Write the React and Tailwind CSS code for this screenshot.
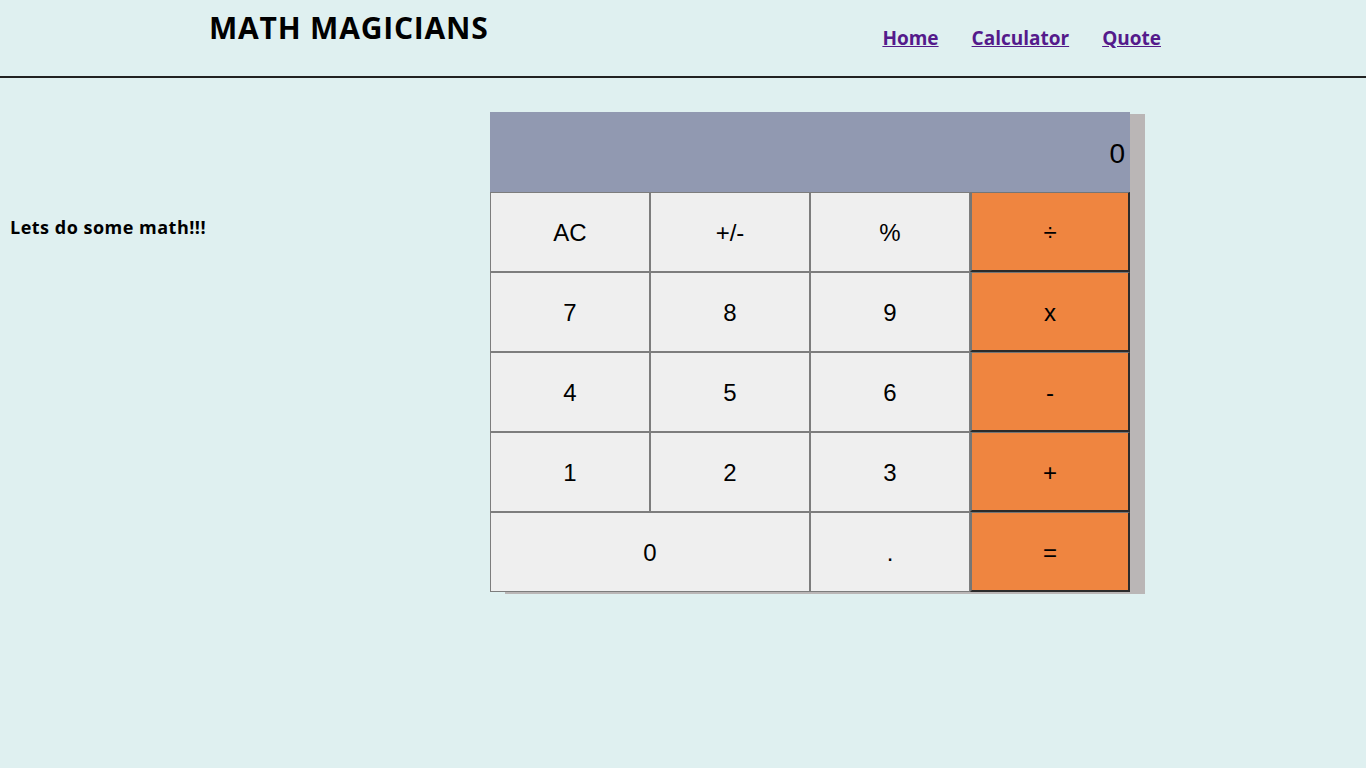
import React from "react";

const rows = [
  ["AC", "+/-", "%", "÷"],
  ["7", "8", "9", "x"],
  ["4", "5", "6", "-"],
  ["1", "2", "3", "+"],
];

function Btn({ label, op, wide }) {
  const base =
    "h-[80px] flex items-center justify-center pt-[2px] text-[24px] text-black font-['Liberation_Sans',Arial,sans-serif]";
  if (op) {
    return (
      <div
        className={`${base} bg-[#ef8540] border-l-2 border-t border-r-2 border-b-2 border-l-[#767676] border-t-[#767676] border-r-[#2b2b2b] border-b-[#2b2b2b]`}
      >
        {label}
      </div>
    );
  }
  return (
    <div
      className={`${base} bg-[#efefef] border border-[#7d7d7d] ${wide ? "col-span-2" : ""}`}
    >
      {label}
    </div>
  );
}

export default function App() {
  return (
    <div className="min-h-[768px] w-full bg-[#dff0f0] font-['Open_Sans',sans-serif] text-black">
      <header className="h-[78px] border-b-2 border-[#222] flex items-start">
        <h1 className="ml-[209px] mt-[10px] text-[30px] leading-[36px] font-bold tracking-[0.8px]">
          MATH MAGICIANS
        </h1>
        <nav className="ml-auto mr-[205px] mt-[25px] flex gap-[33px] text-[19px] leading-[26px] font-bold">
          <a href="#" className="underline text-[#541a8b]">Home</a>
          <a href="#" className="underline text-[#541a8b]">Calculator</a>
          <a href="#" className="underline text-[#541a8b]">Quote</a>
        </nav>
      </header>
      <main className="flex items-start">
        <div className="w-[490px] pl-[10px] pt-[138px]">
          <p className="text-[18px] leading-[22px] font-bold tracking-[0.5px]">
            Lets do some math!!!
          </p>
        </div>
        <div className="mt-[34px] w-[640px] shadow-[15px_2px_0_0_#bab6b6]">
          <div className="h-[80px] bg-[#9199b1] flex items-center justify-end pr-[5px] pt-[3px] text-[28px] font-['Liberation_Sans',Arial,sans-serif]">
            0
          </div>
          <div className="grid grid-cols-4">
            {rows.map((r, i) =>
              r.map((l, j) => <Btn key={`${i}-${j}`} label={l} op={j === 3} />)
            )}
            <Btn label="0" wide />
            <Btn label="." />
            <Btn label="=" op />
          </div>
        </div>
      </main>
    </div>
  );
}
